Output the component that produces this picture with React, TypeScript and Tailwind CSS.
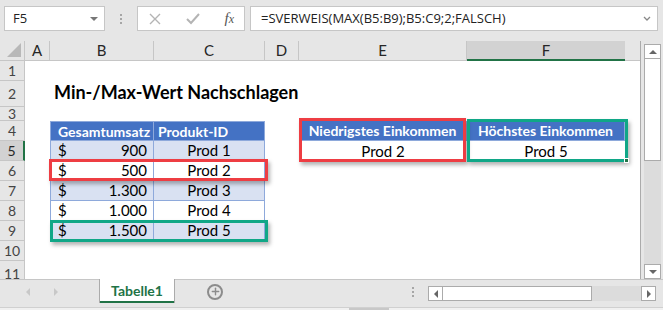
import { Plus } from "lucide-react";

const cols = ["A", "B", "C", "D", "E", "F"];

const sales = [
  { amount: "900", id: "Prod 1", band: true },
  { amount: "500", id: "Prod 2", band: false },
  { amount: "1.300", id: "Prod 3", band: true },
  { amount: "1.000", id: "Prod 4", band: false },
  { amount: "1.500", id: "Prod 5", band: true },
];

const RowHead = ({ n, active }: { n: number; active?: boolean }) => (
  <div
    className={
      active
        ? "flex items-center justify-center border-b border-r-2 border-b-[#c6c6c6] border-r-[#217346] bg-[#d2d2d2] text-[14px] text-[#262626]"
        : "flex items-center justify-center border-b border-r border-[#c6c6c6] bg-[#e6e6e6] text-[14px] text-[#444]"
    }
  >
    {n}
  </div>
);

const Blank = () => <div className="bg-white" />;

const HeadCell = ({ children }: { children: string }) => (
  <div className="flex items-center justify-center bg-[#4472c4] border-r border-b border-[#8ea9db] font-bold text-[14px] text-white whitespace-nowrap">
    {children}
  </div>
);

const App = () => {
  return (
    <div className="relative w-[663px] h-[310px] overflow-hidden bg-[#e6e6e6] font-['Lato',sans-serif] text-black">
      {/* formula bar */}
      <div className="h-[41px] flex items-start pt-[6px] pl-[4px]">
        <div className="w-[101px] h-[25px] bg-white border border-[#c6c6c6] flex items-center justify-between pl-[8px] pr-[6px] font-['Open_Sans',sans-serif] text-[13px] text-[#222]">
          F5
          <span className="w-0 h-0 border-l-[4px] border-r-[4px] border-t-[4px] border-l-transparent border-r-transparent border-t-[#777]" />
        </div>
        <div className="w-[32px] h-[25px] flex flex-col items-center justify-center gap-[2px]">
          <span className="w-[2px] h-[2px] bg-[#a6a6a6]" />
          <span className="w-[2px] h-[2px] bg-[#a6a6a6]" />
          <span className="w-[2px] h-[2px] bg-[#a6a6a6]" />
        </div>
        <div className="w-[108px] h-[25px] bg-white border border-[#c6c6c6] flex items-center pl-[11px] pr-[10px] justify-between">
          <svg width="12" height="12" viewBox="0 0 12 12">
            <path d="M1 1 L11 11 M11 1 L1 11" stroke="#b4b4b4" strokeWidth="1.4" />
          </svg>
          <svg width="14" height="12" viewBox="0 0 14 12">
            <path d="M1 6 L5 10 L13 1" stroke="#b4b4b4" strokeWidth="2" fill="none" />
          </svg>
          <span className="font-['Liberation_Serif',serif] italic text-[15px] text-[#555] leading-none">
            f<span className="text-[12px]">x</span>
          </span>
        </div>
        <div className="ml-[5px] w-[408px] h-[25px] bg-white border border-[#c6c6c6] flex items-center justify-between pl-[10px] pr-[6px] font-['Open_Sans',sans-serif] text-[13px] text-[#222] whitespace-nowrap">
          =SVERWEIS(MAX(B5:B9);B5:C9;2;FALSCH)
          <svg width="8" height="6" viewBox="0 0 8 6">
            <path d="M1 1 L4 4 L7 1" stroke="#888" strokeWidth="1.3" fill="none" />
          </svg>
        </div>
      </div>

      {/* sheet */}
      <div className="flex h-[238px]">
        <div className="w-[641px] border-r border-[#ababab] grid grid-cols-[25px_25px_104px_111px_34px_168px_158px_15px] grid-rows-[20px_20px_26px_14px_20px_20px_20px_20px_20px_20px_20px_18px] bg-white">
          {/* column headers */}
          <div className="relative bg-[#e6e6e6] border-r border-b border-[#c6c6c6]">
            <svg className="absolute right-[3px] bottom-[3px]" width="14" height="14" viewBox="0 0 14 14">
              <path d="M14 0 L14 14 L0 14 Z" fill="#b8b8b8" />
            </svg>
          </div>
          {cols.map((c) =>
            c === "F" ? (
              <div key={c} className="flex items-center justify-center bg-[#d2d2d2] border-b-2 border-[#217346] text-[15px] text-[#262626]">
                {c}
              </div>
            ) : (
              <div key={c} className="flex items-center justify-center bg-[#e6e6e6] border-r border-b border-[#c6c6c6] text-[15px] text-[#262626]">
                {c}
              </div>
            )
          )}
          <div className="bg-[#e6e6e6] border-b border-[#c6c6c6]" />

          {/* row 1 */}
          <RowHead n={1} />
          <Blank /><Blank /><Blank /><Blank /><Blank /><Blank /><Blank />

          {/* row 2 */}
          <RowHead n={2} />
          <Blank />
          <div className="flex items-end pb-[1px] pl-[4px] font-bold text-[18px] whitespace-nowrap overflow-visible z-10">
            Min-/Max-Wert Nachschlagen
          </div>
          <Blank /><Blank /><Blank /><Blank /><Blank />

          {/* row 3 */}
          <RowHead n={3} />
          <Blank /><Blank /><Blank /><Blank /><Blank /><Blank /><Blank />

          {/* row 4 */}
          <RowHead n={4} />
          <Blank />
          <div className="flex items-center px-[7px] bg-[#4472c4] border-l border-t border-r border-b border-[#8ea9db] font-bold text-[14px] text-white whitespace-nowrap">
            Gesamtumsatz
          </div>
          <div className="flex items-center px-[4px] bg-[#4472c4] border-t border-r border-b border-[#8ea9db] font-bold text-[14px] text-white whitespace-nowrap">
            Produkt-ID
          </div>
          <Blank />
          <HeadCell>Niedrigstes Einkommen</HeadCell>
          <HeadCell>Höchstes Einkommen</HeadCell>
          <Blank />

          {/* rows 5-9 */}
          {sales.map((s, i) => (
            <div key={s.id} className="contents">
              <RowHead n={i + 5} active={i === 0} />
              <Blank />
              <div className={`flex items-center justify-between pl-[7px] pr-[6px] border-l border-r border-b border-[#8ea9db] text-[15px] ${s.band ? "bg-[#d9e1f2]" : "bg-white"}`}>
                <span>$</span>
                <span>{s.amount}</span>
              </div>
              <div className={`flex items-center justify-center border-r border-b border-[#8ea9db] text-[15px] ${s.band ? "bg-[#d9e1f2]" : "bg-white"}`}>
                {s.id}
              </div>
              <Blank />
              {i === 0 ? (
                <>
                  <div className="flex items-center justify-center text-[15px] bg-white">Prod 2</div>
                  <div className="flex items-center justify-center text-[15px] bg-white">Prod 5</div>
                </>
              ) : (
                <>
                  <Blank />
                  <Blank />
                </>
              )}
              <Blank />
            </div>
          ))}

          {/* rows 10-11 */}
          <RowHead n={10} />
          <Blank /><Blank /><Blank /><Blank /><Blank /><Blank /><Blank />
          <div className="flex items-start justify-center pt-[2px] bg-[#e6e6e6] border-r border-[#c6c6c6] text-[14px] text-[#444]">11</div>
          <Blank /><Blank /><Blank /><Blank /><Blank /><Blank /><Blank />
        </div>

        {/* vertical scrollbar */}
        <div className="flex-1 flex flex-col pt-[3px] pl-[3px] pr-[2px]">
          <div className="h-[15px] bg-white border border-[#ababab] flex items-center justify-center">
            <span className="w-0 h-0 border-l-[4px] border-r-[4px] border-b-[4px] border-l-transparent border-r-transparent border-b-[#666]" />
          </div>
          <div className="h-[102px] bg-white border-x border-b border-[#ababab]" />
          <div className="flex-1 bg-[#dcdcdc]" />
          <div className="h-[15px] bg-white border border-[#ababab] flex items-center justify-center">
            <span className="w-0 h-0 border-l-[4px] border-r-[4px] border-t-[4px] border-l-transparent border-r-transparent border-t-[#666]" />
          </div>
        </div>
      </div>

      {/* sheet tabs */}
      <div className="h-[28px] flex items-start border-t border-[#c6c6c6]">
        <div className="w-[99px] h-[23px] flex items-center pl-[26px] gap-[24px]">
          <span className="w-0 h-0 border-t-[4px] border-b-[4px] border-r-[4px] border-t-transparent border-b-transparent border-r-[#c8c8c8]" />
          <span className="w-0 h-0 border-t-[4px] border-b-[4px] border-l-[4px] border-t-transparent border-b-transparent border-l-[#c8c8c8]" />
        </div>
        <div className="-mt-px w-[76px] h-[24px] bg-white border-x border-[#ababab] flex flex-col items-center">
          <span className="flex-1 flex items-center font-bold text-[14px] text-[#217346]">Tabelle1</span>
          <span className="w-full h-[2px] bg-[#217346]" />
        </div>
        <div className="w-[80px] h-[23px] flex items-center justify-center">
          <div className="w-[16px] h-[16px] rounded-full border-2 border-[#8c8c8c] flex items-center justify-center">
            <Plus size={11} strokeWidth={3} color="#8c8c8c" />
          </div>
        </div>
        <div className="w-[157px]" />
        <div className="w-[2px] h-[23px] flex flex-col items-center justify-center gap-[2px]">
          <span className="w-[2px] h-[2px] bg-[#a6a6a6]" />
          <span className="w-[2px] h-[2px] bg-[#a6a6a6]" />
          <span className="w-[2px] h-[2px] bg-[#a6a6a6]" />
        </div>
        <div className="ml-[14px] mt-[6px] w-[228px] h-[15px] flex">
          <div className="w-[15px] bg-white border border-[#ababab] flex items-center justify-center">
            <span className="w-0 h-0 border-t-[4px] border-b-[4px] border-r-[4px] border-t-transparent border-b-transparent border-r-[#666]" />
          </div>
          <div className="w-[149px] bg-white border-y border-r border-[#ababab]" />
          <div className="flex-1 bg-[#dcdcdc]" />
          <div className="w-[15px] bg-white border border-[#ababab] flex items-center justify-center">
            <span className="w-0 h-0 border-t-[4px] border-b-[4px] border-l-[4px] border-t-transparent border-b-transparent border-l-[#666]" />
          </div>
        </div>
      </div>
      <div className="h-[3px] bg-[#f0f0f0] border-t border-[#d0d0d0] relative">
        <span className="absolute left-[349px] top-0 w-[40px] h-[2px] bg-[#c8c8c8]" />
      </div>

      {/* highlight boxes */}
      <div className="absolute left-[49px] top-[159px] w-[219px] h-[22px] border-[3px] border-[#ee3d43] shadow-[2px_3px_4px_rgba(0,0,0,0.3)]" />
      <div className="absolute left-[50px] top-[220px] w-[218px] h-[22px] border-[3px] border-[#10a787] shadow-[2px_3px_4px_rgba(0,0,0,0.3)]" />
      <div className="absolute left-[299px] top-[118px] w-[167px] h-[44px] border-[3px] border-[#ee3d43] shadow-[2px_3px_4px_rgba(0,0,0,0.3)]" />
      <div className="absolute left-[467px] top-[119px] w-[161px] h-[43px] border-[3px] border-[#10a787] shadow-[2px_3px_4px_rgba(0,0,0,0.3)]" />
      <div className="absolute left-[624px] top-[158px] w-[5px] h-[5px] bg-[#217346] border border-white" />
    </div>
  );
};

export default App;
